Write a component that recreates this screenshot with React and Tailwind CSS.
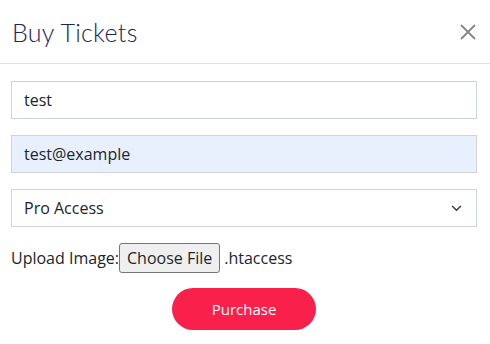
function App() {
  return (
    <div className="w-[490px] h-[344px] bg-white font-['Open_Sans',sans-serif] text-[#212529]">
      <div className="flex items-center justify-between h-[64px] pl-[12px] pr-[14px] border-b border-[#dee2e6]">
        <h1 className="font-['Lato',sans-serif] font-light text-[25px] tracking-[0.3px] text-[#1b2555] leading-none mt-[1px]">Buy Tickets</h1>
        <button className="w-[16px] h-[16px] text-[#858585]">
          <svg viewBox="0 0 16 16" width="16" height="16" fill="none" stroke="currentColor" strokeWidth="1.8">
            <path d="M1 1 L15 15 M15 1 L1 15" />
          </svg>
        </button>
      </div>
      <div className="flex flex-col pl-[11px] pr-[13px] pt-[17px]">
        <input
          defaultValue="test"
          className="h-[38px] border border-[#ced4da] px-[12px] text-[16px] outline-none"
        />
        <input
          defaultValue="test@example"
          className="h-[38px] mt-[16px] border border-[#ced4da] bg-[#e8f0fe] px-[12px] text-[16px] outline-none"
        />
        <div className="flex items-center justify-between h-[38px] mt-[16px] border border-[#ced4da] px-[12px] text-[16px]">
          <span>Pro Access</span>
          <svg viewBox="0 0 12 8" width="11" height="7" fill="none" stroke="#343a40" strokeWidth="1.6" className="mr-[2px]">
            <path d="M1 1.2 L6 6 L11 1.2" />
          </svg>
        </div>
        <div className="flex items-center mt-[16px] h-[30px] text-[16px]">
          <span>Upload Image:</span>
          <span className="h-[30px] px-[7px] flex items-center border border-[#767676] rounded-[3px] bg-[#efefef] text-[16px]">Choose File</span>
          <span className="ml-[4px]">.htaccess</span>
        </div>
        <div className="flex justify-center mt-[15px]">
          <button className="w-[144px] h-[42px] rounded-full bg-[#f9214b] text-white text-[15px] pt-[1px]">Purchase</button>
        </div>
      </div>
    </div>
  )
}

export default App
